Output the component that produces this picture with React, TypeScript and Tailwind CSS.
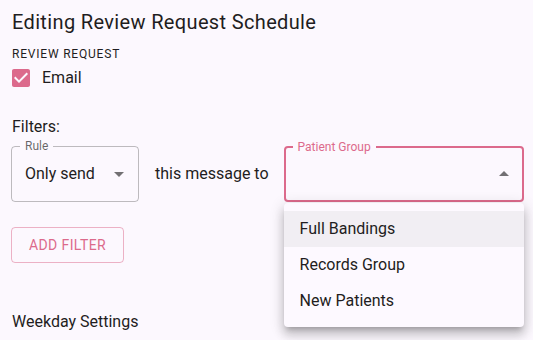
import { ReactNode } from 'react';

const pink = '#dc6a8c';

function Arrow({ up }: { up?: boolean }) {
    return (
        <svg viewBox="0 0 24 24" className="w-6 h-6 fill-black/55">
            <path d={up ? 'M7 14l5-5 5 5z' : 'M7 10l5 5 5-5z'} />
        </svg>
    );
}

function Outlined({ label, active, className, children }: { label: string; active?: boolean; className: string; children: ReactNode }) {
    return (
        <div
            className={`relative h-[56px] rounded-[4px] flex items-center ${className} ${
                active ? 'border-2 border-[#dc6a8c]' : 'border border-black/25'
            }`}
        >
            <span
                className={`absolute -top-[8px] px-[5px] bg-[#fcf8fe] text-[12px] leading-[14px] ${
                    active ? 'left-[7px] text-[#dc6a8c]' : 'left-[8px] text-black/60'
                }`}
            >
                {label}
            </span>
            {children}
        </div>
    );
}

const groups = ['Full Bandings', 'Records Group', 'New Patients'];

export default function App() {
    return (
        <div
            className="h-[340px] w-[533px] overflow-hidden bg-[#fcf8fe] text-[#1f1d21] pl-3"
            style={{ fontFamily: 'Roboto, "Liberation Sans", sans-serif' }}
        >
            <h1 className="pt-[6px] text-[20px] leading-[32px] tracking-[0.35px]">Editing Review Request Schedule</h1>
            <div className="mt-[8px] text-[12px] leading-[16px] uppercase tracking-[0.8px]">Review Request</div>
            <label className="mt-[4px] flex items-center h-[24px] -ml-[3px]">
                <svg viewBox="0 0 24 24" className="w-6 h-6" style={{ fill: pink }}>
                    <path d="M19 3H5c-1.11 0-2 .9-2 2v14c0 1.1.89 2 2 2h14c1.11 0 2-.9 2-2V5c0-1.1-.89-2-2-2zm-9 14l-5-5 1.41-1.41L10 14.17l7.59-7.59L19 8l-9 9z" />
                </svg>
                <span className="ml-[9px] text-[16px]">Email</span>
            </label>

            <div className="mt-[25px] text-[16px] leading-[24px]">Filters:</div>

            <div className="mt-[7px] -ml-px flex items-center">
                <Outlined label="Rule" className="w-[128px] pl-[13px] pr-[7px] justify-between">
                    <span className="text-[16px]">Only send</span>
                    <Arrow />
                </Outlined>
                <span className="ml-[16px] text-[16px]">this message to</span>
                <div className="relative ml-[15px]">
                    <Outlined label="Patient Group" active className="w-[240px] pr-[6px] justify-end">
                        <Arrow up />
                    </Outlined>
                    <ul className="absolute left-0 top-[57px] w-[240px] py-2 bg-[#fdf9ff] rounded-[4px] shadow-[0_5px_5px_-3px_rgba(0,0,0,0.2),0_8px_10px_1px_rgba(0,0,0,0.14),0_3px_14px_2px_rgba(0,0,0,0.12)] z-10">
                        {groups.map((g, i) => (
                            <li
                                key={g}
                                className={`h-[36px] px-4 flex items-center text-[16px] ${i === 0 ? 'bg-[#f1eef3]' : ''}`}
                            >
                                {g}
                            </li>
                        ))}
                    </ul>
                </div>
            </div>

            <button
                className="mt-[25px] -ml-px h-[36px] w-[113px] rounded-[4px] border border-[#dc6a8c]/50 text-[14px] uppercase tracking-[0.4px]"
                style={{ color: pink }}
            >
                Add Filter
            </button>

            <div className="mt-[47px] text-[16px] leading-[24px]">Weekday Settings</div>
        </div>
    );
}
